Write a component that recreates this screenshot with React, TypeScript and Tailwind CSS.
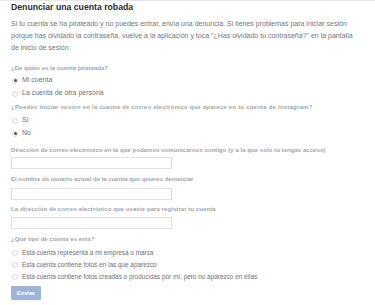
const font = { fontFamily: '"Liberation Sans", Arial, sans-serif' };

function Radio({ label, checked = false, size = 'text-[7px]' }: { label: string; checked?: boolean; size?: string }) {
  return (
    <label className={`flex items-center h-[13px] pl-[12px] gap-[4px] text-[#6f7277] ${size}`}>
      <span className="flex items-center justify-center w-[6px] h-[6px] rounded-full border border-[#d7d9dd] bg-white">
        {checked && <span className="w-[3px] h-[3px] rounded-full bg-[#555]" />}
      </span>
      {label}
    </label>
  );
}

function Label({ children, className = '' }: { children: React.ReactNode; className?: string }) {
  return (
    <div className={`h-[10px] leading-[10px] text-[6px] font-bold text-[#a3a6ab] whitespace-nowrap ${className}`}>
      {children}
    </div>
  );
}

function Field({ className = '' }: { className?: string }) {
  return <div className={`w-[161px] h-[12px] border border-[#dddfe2] bg-white ${className}`} />;
}

export default function App() {
  return (
    <div className="w-[375px] h-[305px] bg-white overflow-hidden" style={font}>
      {/* top rule */}
      <div className="h-px bg-[#e6e7ea]" />

      <div className="px-[11px]">
        <h1 className="h-[12px] leading-[12px] text-[8.7px] font-bold text-[#2b2d31]">Denunciar una cuenta robada</h1>

        <p className="mt-[5px] text-[7px] leading-[12px] text-[#74777c] whitespace-nowrap">
          Si tu cuenta se ha pirateado y no puedes entrar, envía una denuncia. Si tienes problemas para iniciar sesión
          <br />
          porque has olvidado la contraseña, vuelve a la aplicación y toca "¿Has olvidado tu contraseña?" en la pantalla
          <br />
          de inicio de sesión.
        </p>

        {/* whose account */}
        <Label className="mt-[9px]">¿De quién es la cuenta pirateada?</Label>
        <div className="mt-[1px] -ml-[11px]">
          <Radio label="Mi cuenta" checked />
          <Radio label="La cuenta de otra persona" />
        </div>

        <Label className="mt-[2px] tracking-[0.22px]">
          ¿Puedes iniciar sesión en la cuenta de correo electrónico que aparece en tu cuenta de Instagram?
        </Label>
        <div className="mt-[2px] -ml-[11px]">
          <Radio label="Sí" />
          <Radio label="No" checked />
        </div>

        {/* contact fields */}
        <Label className="mt-[5px] tracking-[0.05px]">
          Dirección de correo electrónico en la que podamos comunicarnos contigo (y a la que solo tú tengas acceso)
        </Label>
        <Field className="mt-[2px]" />

        <Label className="mt-[5px]">El nombre de usuario actual de la cuenta que quieres denunciar</Label>
        <Field className="mt-[4px]" />

        <Label className="mt-[4px] tracking-[0.07px]">
          La dirección de correo electrónico que usaste para registrar tu cuenta
        </Label>
        <Field className="mt-[3px]" />

        {/* account type */}
        <Label className="mt-[5px]">¿Qué tipo de cuenta es esta?</Label>
        <div className="mt-[3px] -ml-[11px] [&>label]:h-[12px]">
          <Radio size="text-[6.4px]" label="Esta cuenta representa a mi empresa o marca" />
          <Radio size="text-[6.4px]" label="Esta cuenta contiene fotos en las que aparezco" />
          <Radio size="text-[6.4px]" label="Esta cuenta contiene fotos creadas o producidas por mí, pero no aparezco en ellas" />
        </div>

        <button
          type="button"
          className="mt-[3px] w-[30px] h-[14px] bg-[#9db5dc] text-white text-[6px] font-bold rounded-[1px] flex items-center justify-center"
        >
          Enviar
        </button>
      </div>
    </div>
  );
}
